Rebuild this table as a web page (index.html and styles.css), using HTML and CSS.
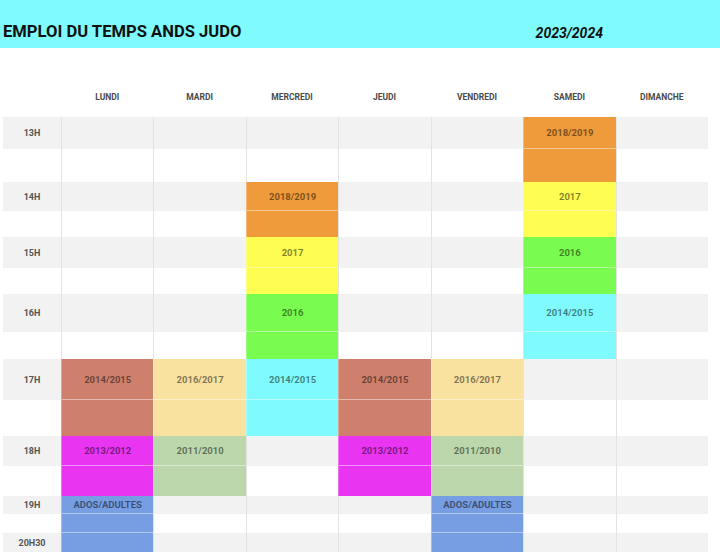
FILE: index.html
```html
<!DOCTYPE html>
<html lang="fr">
<head>
<meta charset="utf-8">
<title>Emploi du temps ANDS Judo</title>
<link rel="stylesheet" href="styles.css">
</head>
<body>
<header class="top">
  <h1 class="title">EMPLOI DU TEMPS ANDS JUDO</h1>
  <span class="year">2023/2024</span>
</header>

<div class="days">
  <span></span>
  <span>LUNDI</span>
  <span>MARDI</span>
  <span>MERCREDI</span>
  <span>JEUDI</span>
  <span>VENDREDI</span>
  <span>SAMEDI</span>
  <span>DIMANCHE</span>
</div>

<div class="grid">
  <!-- row bands -->
  <div class="band grey r1"></div>
  <div class="band r2"></div>
  <div class="band grey r3"></div>
  <div class="band r4"></div>
  <div class="band grey r5"></div>
  <div class="band r6"></div>
  <div class="band grey r7"></div>
  <div class="band r8"></div>
  <div class="band grey r9"></div>
  <div class="band r10"></div>
  <div class="band grey r11"></div>
  <div class="band r12"></div>
  <div class="band grey r13"></div>
  <div class="band r14"></div>
  <div class="band grey r15"></div>

  <!-- column lines -->
  <div class="vl c2"></div>
  <div class="vl c3"></div>
  <div class="vl c4"></div>
  <div class="vl c5"></div>
  <div class="vl c6"></div>
  <div class="vl c7"></div>
  <div class="vl c8"></div>

  <!-- hours -->
  <div class="hour c1 r1">13H</div>
  <div class="hour c1 r3">14H</div>
  <div class="hour c1 r5">15H</div>
  <div class="hour c1 r7">16H</div>
  <div class="hour c1 r9">17H</div>
  <div class="hour c1 r11">18H</div>
  <div class="hour c1 r13">19H</div>
  <div class="hour c1 r15">20H30</div>

  <!-- Lundi -->
  <div class="cell brown split c2 r9">2014/2015</div>
  <div class="cell brown c2 r10"></div>
  <div class="cell magenta split c2 r11">2013/2012</div>
  <div class="cell magenta c2 r12"></div>
  <div class="cell blue split c2 r13">ADOS/ADULTES</div>
  <div class="cell blue split c2 r14"></div>
  <div class="cell blue c2 r15"></div>

  <!-- Mardi -->
  <div class="cell pale split c3 r9">2016/2017</div>
  <div class="cell pale c3 r10"></div>
  <div class="cell sage split c3 r11">2011/2010</div>
  <div class="cell sage c3 r12"></div>

  <!-- Mercredi -->
  <div class="cell orange split c4 r3">2018/2019</div>
  <div class="cell orange c4 r4"></div>
  <div class="cell yellow split c4 r5">2017</div>
  <div class="cell yellow c4 r6"></div>
  <div class="cell green split c4 r7">2016</div>
  <div class="cell green c4 r8"></div>
  <div class="cell cyan split c4 r9">2014/2015</div>
  <div class="cell cyan c4 r10"></div>

  <!-- Jeudi -->
  <div class="cell brown split c5 r9">2014/2015</div>
  <div class="cell brown c5 r10"></div>
  <div class="cell magenta split c5 r11">2013/2012</div>
  <div class="cell magenta c5 r12"></div>

  <!-- Vendredi -->
  <div class="cell pale split c6 r9">2016/2017</div>
  <div class="cell pale c6 r10"></div>
  <div class="cell sage split c6 r11">2011/2010</div>
  <div class="cell sage c6 r12"></div>
  <div class="cell blue split c6 r13">ADOS/ADULTES</div>
  <div class="cell blue split c6 r14"></div>
  <div class="cell blue c6 r15"></div>

  <!-- Samedi -->
  <div class="cell orange split c7 r1">2018/2019</div>
  <div class="cell orange c7 r2"></div>
  <div class="cell yellow split c7 r3">2017</div>
  <div class="cell yellow c7 r4"></div>
  <div class="cell green split c7 r5">2016</div>
  <div class="cell green c7 r6"></div>
  <div class="cell cyan split c7 r7">2014/2015</div>
  <div class="cell cyan c7 r8"></div>
</div>
</body>
</html>
```

FILE: styles.css
```css
* { box-sizing: border-box; }

html, body {
  margin: 0;
  padding: 0;
  background: #ffffff;
  font-family: Roboto, "Liberation Sans", Arial, sans-serif;
}

.top {
  height: 48px;
  background: #7ffbfd;
  display: flex;
  align-items: center;
  padding: 14px 0 0 3px;
}

.title {
  margin: 0;
  font-size: 16.6px;
  font-weight: 700;
  color: #111;
  letter-spacing: 0;
}

.year {
  margin-left: auto;
  margin-right: 117px;
  margin-top: 4px;
  font-size: 14px;
  font-weight: 700;
  font-style: italic;
  color: #111;
}

.days {
  display: grid;
  grid-template-columns: 58px repeat(7, 1fr);
  width: 705px;
  margin-left: 3px;
  height: 69px;
  padding-top: 44px;
}

.days span {
  text-align: center;
  font-size: 8.5px;
  font-weight: 700;
  color: #4a4a4a;
  line-height: 10px;
}

.grid {
  display: grid;
  grid-template-columns: 58px repeat(7, 1fr);
  grid-template-rows: 32px 33px 29px 26px 31px 26px 38px 27px 41px 36px 30px 30px 18px 19px 19px;
  width: 705px;
  margin-left: 3px;
}

.band { grid-column: 1 / -1; background: #ffffff; }
.band.grey { background: #f2f2f2; }

.vl {
  grid-row: 1 / -1;
  border-left: 1px solid #e3e3e3;
}

.c1 { grid-column: 1; }
.c2 { grid-column: 2; }
.c3 { grid-column: 3; }
.c4 { grid-column: 4; }
.c5 { grid-column: 5; }
.c6 { grid-column: 6; }
.c7 { grid-column: 7; }
.c8 { grid-column: 8; }

.r1 { grid-row: 1; }
.r2 { grid-row: 2; }
.r3 { grid-row: 3; }
.r4 { grid-row: 4; }
.r5 { grid-row: 5; }
.r6 { grid-row: 6; }
.r7 { grid-row: 7; }
.r8 { grid-row: 8; }
.r9 { grid-row: 9; }
.r10 { grid-row: 10; }
.r11 { grid-row: 11; }
.r12 { grid-row: 12; }
.r13 { grid-row: 13; }
.r14 { grid-row: 14; }
.r15 { grid-row: 15; }

.hour {
  display: flex;
  align-items: center;
  justify-content: center;
  font-size: 9px;
  font-weight: 700;
  color: #555;
}

.cell {
  display: flex;
  align-items: center;
  justify-content: center;
  font-size: 9.5px;
  font-weight: 700;
  color: rgba(0, 0, 0, 0.5);
  border-left: 1px solid rgba(255, 255, 255, 0.3);
}

.cell.split { border-bottom: 1px solid rgba(255, 255, 255, 0.45); }

.orange { background: #ef9b3b; }
.yellow { background: #fdfd52; }
.green { background: #79fb4f; }
.cyan { background: #7ffbfd; }
.brown { background: #cf806d; }
.pale { background: #f9e2a0; }
.magenta { background: #e935f2; }
.sage { background: #bdd7ad; }
.blue { background: #779de3; }
```
